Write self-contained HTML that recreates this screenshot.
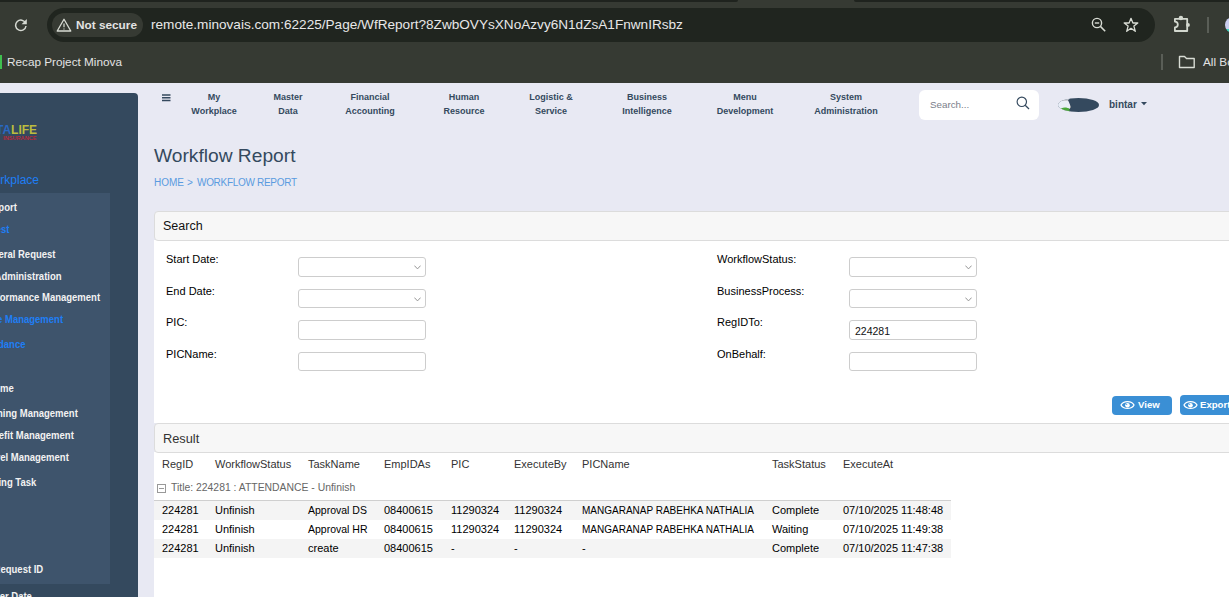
<!DOCTYPE html>
<html><head><meta charset="utf-8">
<style>
*{margin:0;padding:0;box-sizing:border-box}
html,body{width:1229px;height:597px;overflow:hidden;background:#e8e9f3;font-family:"Liberation Sans",sans-serif}
.a{position:absolute;white-space:nowrap}
#chrome{position:absolute;left:0;top:0;width:1229px;height:83px;background:#363a33}
#tabstrip{position:absolute;left:0;top:0;width:738px;height:2px;background:#1f231e;border-bottom-right-radius:2px}
#pill{position:absolute;left:47px;top:8px;width:1108px;height:34px;border-radius:17px;background:#20251f}
#chip{position:absolute;left:52px;top:13px;width:91px;height:24px;border-radius:12px;background:#363a33}
.ct{color:#e3e3e3}
#sidebar{position:absolute;left:0;top:93px;width:138px;height:520px;background:#34495e;border-top-right-radius:4px;overflow:hidden}
#sub{position:absolute;left:0;top:100px;width:110px;height:391px;background:#3e546c}
.si{position:absolute;white-space:nowrap;font-size:10px;font-weight:bold;color:#f2f2f2;transform:scaleX(0.95);transform-origin:100% 50%}
.nav{position:absolute;top:90px;text-align:center;font-size:9px;font-weight:bold;color:#34495e;line-height:14px;white-space:nowrap}
.panel-h{position:absolute;left:154px;width:1090px;background:#f7f7f7;border:1px solid #dcdcdc;border-radius:4px}
.lbl{position:absolute;font-size:11px;color:#000;white-space:nowrap}
.inp{position:absolute;width:128px;height:20px;border:1px solid #cdcdcd;border-radius:3px;background:#fff}
.chev{position:absolute;left:115px;top:7px;width:7px;height:5px}
.th{position:absolute;top:458px;font-size:11px;color:#333;white-space:nowrap}
.row{position:absolute;left:154px;width:797px;height:19px}
.td{position:absolute;line-height:13px;font-size:11px;color:#000;white-space:nowrap}
.bc{font-size:10px;line-height:12px;color:#5a9be0}
</style></head><body>
<!-- Browser chrome -->
<div id="chrome">
  <div id="tabstrip"></div><div class="a" style="left:854px;top:0;width:375px;height:2px;background:#1f231e;border-bottom-left-radius:2px"></div>
  <!-- reload -->
  <svg class="a" style="left:14px;top:18px" width="14" height="14" viewBox="0 0 14 14"><path d="M11.6 5.2A5.2 5.2 0 1 0 12 8" fill="none" stroke="#d5d9d2" stroke-width="1.5"/><path d="M7.6 6.2H12.8V1Z" fill="#d5d9d2"/></svg>
  <div id="pill"></div>
  <div id="chip"></div>
  <svg class="a" style="left:56px;top:18px" width="16" height="14" viewBox="0 0 16 14"><path d="M8 1.2L14.8 13H1.2Z" fill="none" stroke="#d8dcd4" stroke-width="1.3" stroke-linejoin="round"/><path d="M8 5.5V9.3M8 10.5V11.5" stroke="#d8dcd4" stroke-width="1.2"/></svg>
  <div class="a ct" style="left:76px;top:17px;font-size:11.8px;font-weight:bold;line-height:16px">Not secure</div>
  <div class="a ct" style="left:151px;top:16px;font-size:13.6px;line-height:18px;color:#e8e8e8" id="url">remote.minovais.com:62225/Page/WfReport?8ZwbOVYsXNoAzvy6N1dZsA1FnwnIRsbz</div>
  <!-- zoom icon -->
  <svg class="a" style="left:1091px;top:17px" width="16" height="16" viewBox="0 0 16 16"><circle cx="6" cy="6" r="4.6" fill="none" stroke="#d8dcd4" stroke-width="1.4"/><path d="M3.8 6H8.2" stroke="#d8dcd4" stroke-width="1.4"/><path d="M9.4 9.4L14.2 14.2" stroke="#d8dcd4" stroke-width="1.5"/></svg>
  <!-- star -->
  <svg class="a" style="left:1123px;top:17px" width="16" height="16" viewBox="0 0 16 16"><path d="M8 1.3L9.9 6H14.8L10.9 9.1L12.3 14.3L8 11.3L3.7 14.3L5.1 9.1L1.2 6H6.1Z" fill="none" stroke="#d8dcd4" stroke-width="1.3" stroke-linejoin="round"/></svg>
  <!-- puzzle -->
  <svg class="a" style="left:1173px;top:15px" width="18" height="18" viewBox="0 0 18 18"><circle cx="7.9" cy="3" r="2.2" fill="#d3d8cf"/><circle cx="15" cy="9.9" r="1.9" fill="#d3d8cf"/><path d="M1.9 3.9H14.2V16H1.9V12.4A2.9 2.9 0 0 0 1.9 6.6Z" fill="none" stroke="#d3d8cf" stroke-width="1.8" stroke-linejoin="round"/></svg>
  <div class="a" style="left:1207px;top:17px;width:2px;height:16px;background:#5a5e57"></div>
  <div class="a" style="left:1225px;top:17px;width:16px;height:16px;border-radius:8px;background:linear-gradient(#c9ccee 73%,#3dd6c0 73%)"></div>
  <!-- bookmarks -->
  <div class="a" style="left:0;top:55px;width:2px;height:14px;background:#3fbf4f"></div>
  <div class="a ct" style="left:7px;top:54px;font-size:11.75px;line-height:15px">Recap Project Minova</div>
  <div class="a" style="left:1161px;top:54px;width:2px;height:16px;background:#5a5e57"></div>
  <svg class="a" style="left:1178px;top:55px" width="18" height="14" viewBox="0 0 18 14"><path d="M1.5 1.5H6.5L8.5 3.5H16.2V12.5H1.5Z" fill="none" stroke="#d8dcd4" stroke-width="1.4" stroke-linejoin="round"/></svg>
  <div class="a ct" style="left:1203px;top:54px;font-size:11.75px;line-height:15px">All Bookmarks</div>
</div>

<!-- Sidebar -->
<div id="sidebar">
  <div class="a" style="left:-4px;top:30px;font-size:12px;font-weight:bold;line-height:14px"><span style="color:#2a68c4">TA</span><span style="color:#bdbd3e">LIFE</span></div>
  <div class="a" style="left:3px;top:41.8px;font-size:5.8px;font-weight:bold;line-height:6px;color:#b8283a;letter-spacing:0.1px;transform:scaleX(0.95);transform-origin:0 50%">INSURANCE</div>
  <div class="a" style="right:99px;top:80px;font-size:12px;line-height:14px;color:#1e7ef5">My Workplace</div>
  <div id="sub"></div>
<div class="si" style="right:120.7px;top:108.5px;color:#f2f2f2;line-height:12px">Workflow Report</div>
<div class="si" style="right:128.8px;top:130.5px;color:#1e7ef5;line-height:12px">Request</div>
<div class="si" style="right:82.7px;top:155.5px;color:#f2f2f2;line-height:12px">General Request</div>
<div class="si" style="right:76.0px;top:177.5px;color:#f2f2f2;line-height:12px">Administration</div>
<div class="si" style="right:37.8px;top:199.0px;color:#f2f2f2;line-height:12px">Performance Management</div>
<div class="si" style="right:74.6px;top:220.5px;color:#1e7ef5;line-height:12px">Time Management</div>
<div class="si" style="right:112.9px;top:246.2px;color:#1e7ef5;line-height:12px">Attendance</div>
<div class="si" style="right:124.4px;top:289.5px;color:#f2f2f2;line-height:12px">Home</div>
<div class="si" style="right:60.3px;top:314.5px;color:#f2f2f2;line-height:12px">Training Management</div>
<div class="si" style="right:64.0px;top:336.8px;color:#f2f2f2;line-height:12px">Benefit Management</div>
<div class="si" style="right:69.5px;top:358.5px;color:#f2f2f2;line-height:12px">Travel Management</div>
<div class="si" style="right:102.1px;top:383.5px;color:#f2f2f2;line-height:12px">Pending Task</div>
<div class="si" style="right:94.9px;top:470.5px;color:#f2f2f2;line-height:12px">Request ID</div>
<div class="si" style="right:106.5px;top:497.5px;color:#f2f2f2;line-height:12px">Filter Date</div>
</div>

<!-- Top nav -->
<svg class="a" style="left:162px;top:94px" width="9" height="8" viewBox="0 0 9 8"><path d="M0 1H8.5M0 3.8H8.5M0 6.6H8.5" stroke="#34495e" stroke-width="1.5"/></svg>
<div class="nav" style="left:184px;width:60px">My<br>Workplace</div>
<div class="nav" style="left:258px;width:60px">Master<br>Data</div>
<div class="nav" style="left:330px;width:80px">Financial<br>Accounting</div>
<div class="nav" style="left:424px;width:80px">Human<br>Resource</div>
<div class="nav" style="left:511px;width:80px">Logistic &amp;<br>Service</div>
<div class="nav" style="left:607px;width:80px">Business<br>Intelligence</div>
<div class="nav" style="left:705px;width:80px">Menu<br>Development</div>
<div class="nav" style="left:801px;width:90px">System<br>Administration</div>
<div class="a" style="left:919px;top:90px;width:120px;height:30px;background:#fff;border-radius:6px"></div>
<div class="a" style="left:930px;top:97.5px;font-size:9.8px;line-height:14px;color:#7a7e8a">Search...</div>
<svg class="a" style="left:1016px;top:96px" width="14" height="14" viewBox="0 0 14 14"><circle cx="5.8" cy="5.8" r="4.7" fill="none" stroke="#34495e" stroke-width="1.15"/><path d="M9.2 9.2L13 13" stroke="#34495e" stroke-width="1.25"/></svg>
<svg class="a" style="left:1058px;top:98px" width="41" height="14" viewBox="0 0 41 14"><defs><clipPath id="ec"><ellipse cx="20.5" cy="7" rx="20.5" ry="7"/></clipPath></defs><ellipse cx="20.5" cy="7" rx="20.5" ry="7" fill="#34495e"/><g clip-path="url(#ec)"><path d="M0 0H13V14H0Z" fill="#e9eef7"/><path d="M0 2H12.5V12.5H0" fill="none" stroke="#999" stroke-width="0.8"/><path d="M1 13C3 9 8 8.5 12 11V14H1Z" fill="#4aa83a"/><path d="M10 2L13 0V14L11 12L13 9Z" fill="#34495e"/></g></svg>
<div class="a" style="left:1109px;top:98px;font-size:10px;font-weight:bold;line-height:14px;color:#34495e">bintar</div>
<svg class="a" style="left:1141px;top:102px" width="6" height="4" viewBox="0 0 6 4"><path d="M0 0H6L3 3.2Z" fill="#34495e"/></svg>

<!-- Title -->
<div class="a" style="left:154px;top:145px;font-size:19.2px;line-height:22px;color:#34495e">Workflow Report</div>
<div class="a bc" style="left:154px;top:177px">HOME</div><div class="a bc" style="left:187px;top:177px">&gt;</div><div class="a bc" style="left:197px;top:177px;letter-spacing:-0.3px">WORKFLOW REPORT</div>

<!-- Search panel -->
<div class="a" style="left:154px;top:240px;width:1100px;height:183px;background:#fff"></div>
<div class="panel-h" style="top:211px;height:30px"></div>
<div class="a" style="left:163px;top:219px;font-size:12.5px;line-height:14px;color:#111">Search</div>

<div class="lbl" style="left:166px;top:253px">Start Date:</div>
<div class="lbl" style="left:166px;top:285px">End Date:</div>
<div class="lbl" style="left:166px;top:316px">PIC:</div>
<div class="lbl" style="left:166px;top:348px">PICName:</div>
<div class="inp" style="left:298px;top:257px"><svg class="chev" viewBox="0 0 7 5"><path d="M0.4 0.6L3.5 3.9L6.6 0.6" fill="none" stroke="#8a8a8a" stroke-width="0.9"/></svg></div>
<div class="inp" style="left:298px;top:289px;height:19px"><svg class="chev" viewBox="0 0 7 5"><path d="M0.4 0.6L3.5 3.9L6.6 0.6" fill="none" stroke="#8a8a8a" stroke-width="0.9"/></svg></div>
<div class="inp" style="left:298px;top:320px"></div>
<div class="inp" style="left:298px;top:352px;height:19px"></div>

<div class="lbl" style="left:717px;top:253px">WorkflowStatus:</div>
<div class="lbl" style="left:717px;top:285px">BusinessProcess:</div>
<div class="lbl" style="left:717px;top:316px">RegIDTo:</div>
<div class="lbl" style="left:717px;top:348px">OnBehalf:</div>
<div class="inp" style="left:849px;top:257px"><svg class="chev" viewBox="0 0 7 5"><path d="M0.4 0.6L3.5 3.9L6.6 0.6" fill="none" stroke="#8a8a8a" stroke-width="0.9"/></svg></div>
<div class="inp" style="left:849px;top:289px;height:19px"><svg class="chev" viewBox="0 0 7 5"><path d="M0.4 0.6L3.5 3.9L6.6 0.6" fill="none" stroke="#8a8a8a" stroke-width="0.9"/></svg></div>
<div class="inp" style="left:849px;top:320px"><div class="a" style="left:5px;top:4px;font-size:10.5px;line-height:12px;color:#111">224281</div></div>
<div class="inp" style="left:849px;top:352px;height:19px"></div>

<!-- Buttons -->
<div class="a" style="left:1112px;top:396px;width:60px;height:19px;background:#3a8fd5;border-radius:4px"></div>
<div class="a" style="left:1180px;top:395px;width:70px;height:20px;background:#3a8fd5;border-radius:4px"></div>
<svg class="a" style="left:1120px;top:400px" width="15" height="10" viewBox="0 0 15 10"><path d="M1 5C3.2 0.4 11.8 0.4 14 5C11.8 9.6 3.2 9.6 1 5Z" fill="none" stroke="#fff" stroke-width="1.3"/><circle cx="7.5" cy="5.2" r="2.3" fill="#fff"/><circle cx="6.7" cy="4.3" r="0.6" fill="#3a8fd5"/></svg>
<div class="a" style="left:1138px;top:399px;font-size:9.6px;font-weight:bold;line-height:12px;color:#fff">View</div>
<svg class="a" style="left:1183px;top:400px" width="15" height="10" viewBox="0 0 15 10"><path d="M1 5C3.2 0.4 11.8 0.4 14 5C11.8 9.6 3.2 9.6 1 5Z" fill="none" stroke="#fff" stroke-width="1.3"/><circle cx="7.5" cy="5.2" r="2.3" fill="#fff"/><circle cx="6.7" cy="4.3" r="0.6" fill="#3a8fd5"/></svg>
<div class="a" style="left:1200px;top:399px;font-size:9.6px;font-weight:bold;line-height:12px;color:#fff">Export</div>

<!-- Result panel -->
<div class="a" style="left:154px;top:452px;width:1100px;height:150px;background:#fff"></div>
<div class="panel-h" style="top:423px;height:30px"></div>
<div class="a" style="left:163px;top:432px;font-size:12.8px;line-height:14px;color:#333">Result</div>

<div class="th" style="left:162px">RegID</div>
<div class="th" style="left:215px">WorkflowStatus</div>
<div class="th" style="left:308px">TaskName</div>
<div class="th" style="left:384px">EmpIDAs</div>
<div class="th" style="left:451px">PIC</div>
<div class="th" style="left:514px">ExecuteBy</div>
<div class="th" style="left:582px">PICName</div>
<div class="th" style="left:772px">TaskStatus</div>
<div class="th" style="left:843px">ExecuteAt</div>

<div class="a" style="left:157px;top:484px;width:9px;height:9px;border:1px solid #999"></div>
<div class="a" style="left:159px;top:488px;width:5px;height:1px;background:#999"></div>
<div class="a" style="left:171px;top:482px;font-size:10.4px;line-height:12px;color:#666">Title: 224281 : ATTENDANCE - Unfinish</div>
<div class="a" style="left:154px;top:500px;width:797px;height:1px;background:#cfcfcf"></div>

<div class="row" style="top:501px;background:#f4f4f4"></div>
<div class="row" style="top:520px;background:#fff"></div>
<div class="row" style="top:539px;background:#f4f4f4"></div>

<div class="td" style="left:162px;top:504px">224281</div>
<div class="td" style="left:215px;top:504px">Unfinish</div>
<div class="td" style="left:308px;top:504px;font-size:10.5px">Approval DS</div>
<div class="td" style="left:384px;top:504px">08400615</div>
<div class="td" style="left:451px;top:504px">11290324</div>
<div class="td" style="left:514px;top:504px">11290324</div>
<div class="td" style="left:582px;top:504px;font-size:10px">MANGARANAP RABEHKA NATHALIA</div>
<div class="td" style="left:772px;top:504px">Complete</div>
<div class="td" style="left:843px;top:504px">07/10/2025 11:48:48</div>
<div class="td" style="left:162px;top:523px">224281</div>
<div class="td" style="left:215px;top:523px">Unfinish</div>
<div class="td" style="left:308px;top:523px;font-size:10.5px">Approval HR</div>
<div class="td" style="left:384px;top:523px">08400615</div>
<div class="td" style="left:451px;top:523px">11290324</div>
<div class="td" style="left:514px;top:523px">11290324</div>
<div class="td" style="left:582px;top:523px;font-size:10px">MANGARANAP RABEHKA NATHALIA</div>
<div class="td" style="left:772px;top:523px">Waiting</div>
<div class="td" style="left:843px;top:523px">07/10/2025 11:49:38</div>
<div class="td" style="left:162px;top:542px">224281</div>
<div class="td" style="left:215px;top:542px">Unfinish</div>
<div class="td" style="left:308px;top:542px">create</div>
<div class="td" style="left:384px;top:542px">08400615</div>
<div class="td" style="left:451px;top:542px">-</div>
<div class="td" style="left:514px;top:542px">-</div>
<div class="td" style="left:582px;top:542px">-</div>
<div class="td" style="left:772px;top:542px">Complete</div>
<div class="td" style="left:843px;top:542px">07/10/2025 11:47:38</div>
</body></html>
